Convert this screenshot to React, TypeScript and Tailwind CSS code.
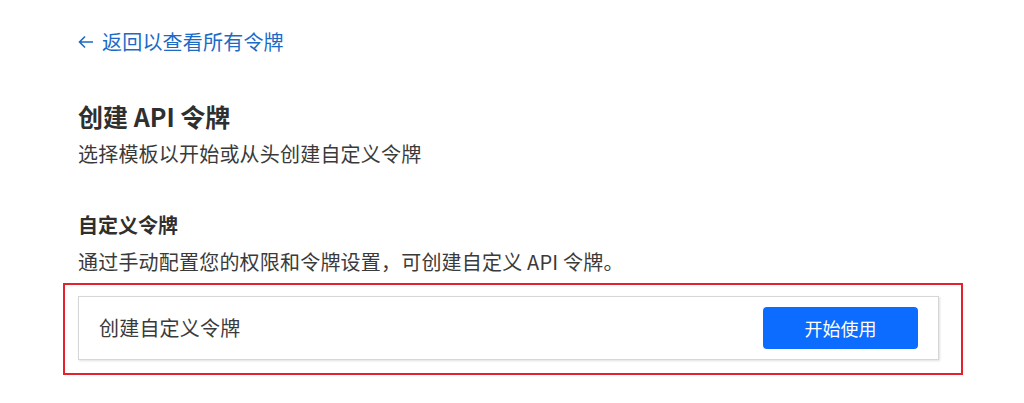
import React from 'react';

export default function App() {
  return (
    <div
      className="w-[1024px] h-[403px] bg-white overflow-hidden pl-[63px] pt-[26px]"
      style={{ fontFamily: '"Noto Sans CJK SC", "Noto Sans", sans-serif' }}
    >
      <div className="pl-[15px]">
        <a href="#" className="flex items-center gap-[8px] text-[20px] leading-[32px] text-[#1b6ac6]">
          <svg width="16" height="14" viewBox="0 0 16 14" fill="none" stroke="currentColor" strokeWidth="1.6">
            <path d="M15 7H2M7 1.5L1.5 7 7 12.5" />
          </svg>
          <span className="tracking-[0.2px]">返回以查看所有令牌</span>
        </a>

        <h1 className="mt-[41px] text-[25px] leading-[34px] font-bold text-[#2f2f2f]">创建 API 令牌</h1>
        <p className="mt-[5px] text-[20px] leading-[32px] text-[#3a3a3a] tracking-[0.2px]">选择模板以开始或从头创建自定义令牌</p>

        <h2 className="mt-[40px] text-[20px] leading-[30px] font-bold text-[#2f2f2f]">自定义令牌</h2>
        <p className="mt-[6px] text-[20px] leading-[32px] text-[#3a3a3a] tracking-[0.2px]">通过手动配置您的权限和令牌设置，可创建自定义 API 令牌。</p>
      </div>

      <div className="mt-[5px] w-[900px] border-2 border-[#e3222c] pl-[13px] pr-[22px] pt-[11px] pb-[13px]">
        <div className="flex items-center justify-between h-[64px] border border-[#d6d6d6] shadow-[1px_1px_2px_rgba(0,0,0,0.12)] pl-[20px] pr-[20px]">
          <span className="text-[20px] text-[#3a3a3a] tracking-[0.2px]">创建自定义令牌</span>
          <button className="w-[155px] h-[42px] rounded-[4px] bg-[#0b6cff] text-white text-[18px]">开始使用</button>
        </div>
      </div>
    </div>
  );
}
